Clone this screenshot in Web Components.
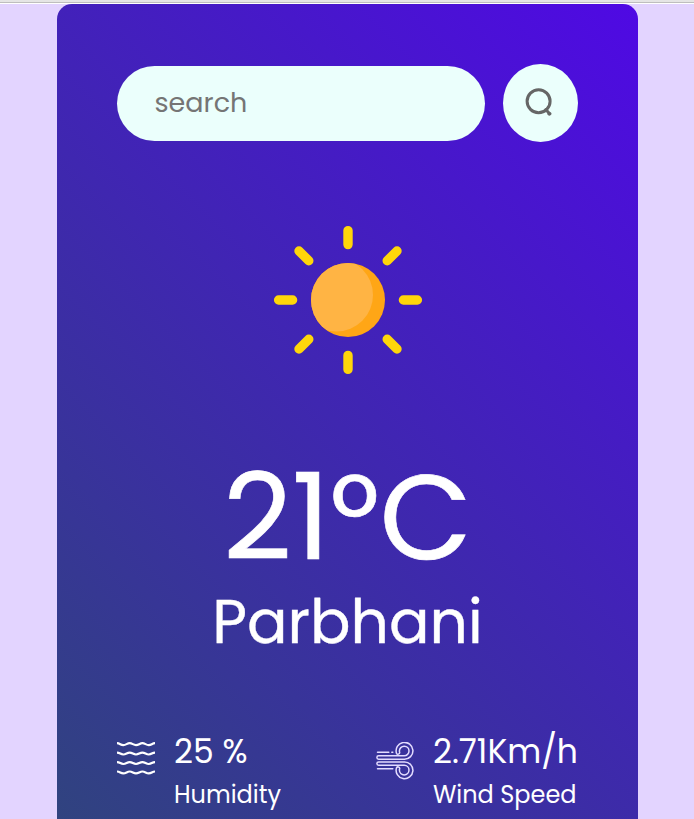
<!DOCTYPE html>
<html lang="en">
<head>
<meta charset="utf-8">
<title>Weather</title>
<style>
html,body{margin:0;height:100%;overflow:hidden}
body{background:#e3d4ff;font-family:Poppins,Inter,"Open Sans",sans-serif;color:#fff}
</style>
</head>
<body>
<weather-app></weather-app>
<script>
const define = (name, html) => customElements.define(name, class extends HTMLElement {
  constructor() {
    super();
    this.attachShadow({mode: 'open'}).innerHTML = html;
  }
});

define('search-bar', `<style>
:host{display:flex;align-items:center;gap:18px;height:78px}
.field{width:368px;height:75px;box-sizing:border-box;padding:0 37.5px;border-radius:38px;background:#ebfffc;color:#757575;font-size:27px;line-height:74px}
button{width:75px;height:78px;border:0;border-radius:50%;padding:0;background:#ebfffc;display:block}
svg{display:block}
</style><div class="field">search</div>
<button aria-label="Search"><svg width="75" height="78" viewBox="0 0 75 78" fill="none" stroke="#666" stroke-width="3" stroke-linecap="round"><circle cx="35.6" cy="37.3" r="11.5"/><path d="M42.8 45.6l3.8 4.2"/><path d="M45.8 50l1.2-.3"/></svg></button>`);

define('sun-icon', `<style>:host{display:block}svg{display:block}</style>
<svg width="150" height="150" viewBox="-75 -75 150 150">
<defs><clipPath id="disc"><circle r="37"/></clipPath></defs>
<circle r="37" fill="#ffa616"/><circle cx="-11.5" cy="-5" r="36.5" fill="#ffb444" clip-path="url(#disc)"/>
<g stroke="#ffd60a" stroke-width="9.4" stroke-linecap="round">
<path d="M0-69.4v14M0 69.4v-14M-69.4 0h14M69.4 0h-14M-49-49l9.8 9.8M49-49l-9.8 9.8M-49 49l9.8-9.8M49 49l-9.8-9.8"/></g></svg>`);

define('humidity-icon', `<style>:host,svg{display:block}</style>
<svg width="38" height="38" viewBox="0 1.2 38 38" fill="none" stroke="#fff" stroke-width="2.2">
<path id="w" d="M0 2.4C3 2.4 3.5 4.3 6.3 4.3S10 2.4 12.7 2.4 16.3 4.3 19 4.3 22.7 2.4 25.4 2.4 29 4.3 31.8 4.3 35 2.4 38 2.4"/>
<use href="#w" y="9.4"/><use href="#w" y="18.9"/><use href="#w" y="28.3"/></svg>`);

define('wind-icon', `<style>:host,svg{display:block}</style>
<svg width="38" height="38" viewBox="0 0.6 38 38" fill="none" stroke="#e3dcff" stroke-width="1.5" stroke-linecap="round" stroke-linejoin="round">
<path d="M1.5 10.9H12.8M15.8 10.9h1"/>
<path d="M28.2 17.8H2.6a1.7 1.7 0 0 1 0-3.4H28.2a4.8 4.8 0 1 0-4.8-4.8c0 1 .3 1.4 .3 1.4a1.7 1.7 0 0 1-3.2 .9A8.4 8.4 0 1 1 28.2 17.8"/>
<path d="M28.2 20.5H2.6a1.7 1.7 0 0 0 0 3.4H28.2a4.8 4.8 0 1 1-4.8 4.8c0-1 .3-1.4 .3-1.4a1.7 1.7 0 0 0-3.2-.9A8.4 8.4 0 1 0 28.2 20.5"/>
<path d="M1.5 27.4H16.8"/></svg>`);

define('weather-stat', `<style>
:host{display:flex;align-items:flex-start;gap:19px;white-space:nowrap}
.icon{width:38px;padding-top:10px}
.value{font-size:33px;line-height:40px;height:42px}
.label{font-size:24px;line-height:32px;padding-top:5px}
</style><div class="icon"><slot name="icon"></slot></div>
<div><div class="value"><slot name="value"></slot></div><div class="label"><slot name="label"></slot></div></div>`);

define('weather-card', `<style>
:host{display:flex;flex-direction:column;width:581px;height:815px;margin:0 auto;box-sizing:border-box;padding:60px 60px 0;border-radius:15px 15px 0 0;background:linear-gradient(45deg,#30437f,#4f09e4);overflow:hidden}
sun-icon{margin:83px auto 0}
.temp{height:130px;margin-top:77px;text-align:center;font-size:120px;line-height:130px;-webkit-text-stroke:.6px #fff}
.city{height:70px;margin-top:5px;text-align:center;font-size:60px;line-height:70px;-webkit-text-stroke:.4px #fff}
.stats{display:flex;justify-content:space-between;margin-top:75px}
</style>
<search-bar></search-bar>
<sun-icon></sun-icon>
<div class="temp">21°C</div>
<div class="city">Parbhani</div>
<div class="stats">
<weather-stat><humidity-icon slot="icon"></humidity-icon><span slot="value">25 %</span><span slot="label">Humidity</span></weather-stat>
<weather-stat><wind-icon slot="icon"></wind-icon><span slot="value">2.71Km/h</span><span slot="label">Wind Speed</span></weather-stat>
</div>`);

define('weather-app', `<style>
:host{display:block;height:819px;overflow:hidden}
.edge{height:4px;background:linear-gradient(#e5e5e5 0 2px,#bebebe 2px 3px,#fff 3px 4px)}
.body{padding:0 56px 0 57px}
</style><div class="edge"></div><div class="body"><weather-card></weather-card></div>`);
</script>
</body>
</html>
